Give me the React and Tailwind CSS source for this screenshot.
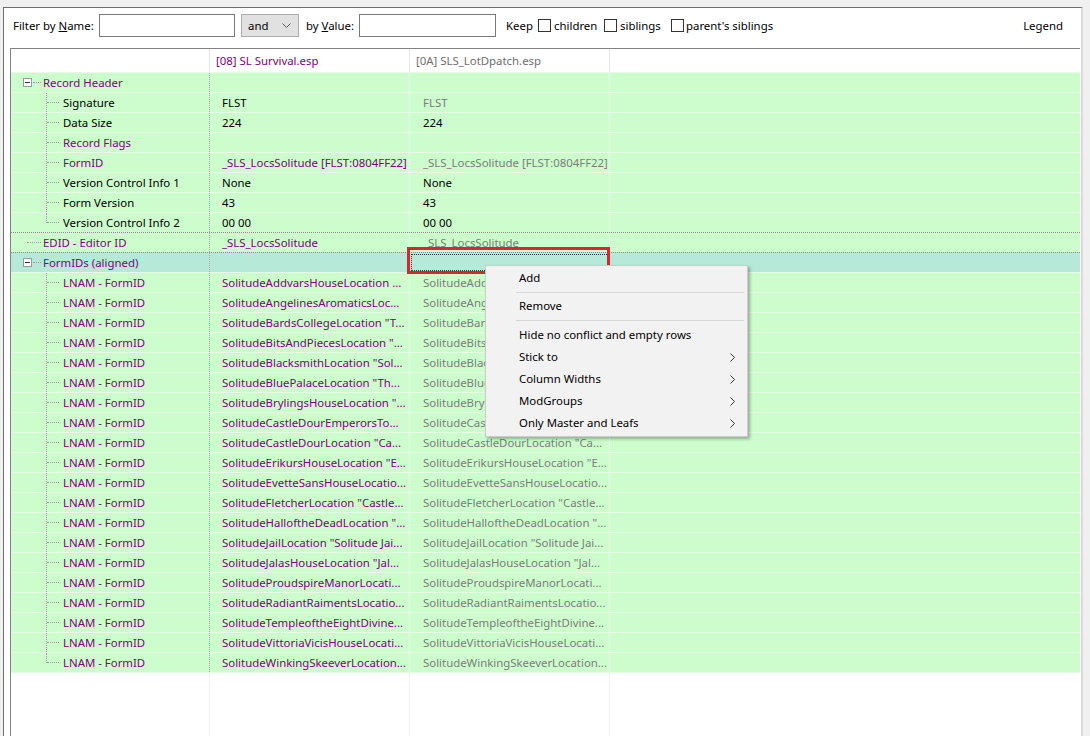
import React from "react";

const P = "text-[#800080]";
const K = "text-[#000000]";
const G = "text-[#7c7c7c]";

const lnam = [
  "SolitudeAddvarsHouseLocation ...",
  "SolitudeAngelinesAromaticsLoc...",
  'SolitudeBardsCollegeLocation "T...',
  'SolitudeBitsAndPiecesLocation "...',
  'SolitudeBlacksmithLocation "Sol...',
  'SolitudeBluePalaceLocation "Th...',
  'SolitudeBrylingsHouseLocation "...',
  "SolitudeCastleDourEmperorsTo...",
  'SolitudeCastleDourLocation "Ca...',
  'SolitudeErikursHouseLocation "E...',
  "SolitudeEvetteSansHouseLocatio...",
  'SolitudeFletcherLocation "Castle...',
  'SolitudeHalloftheDeadLocation "...',
  'SolitudeJailLocation "Solitude Jai...',
  'SolitudeJalasHouseLocation "Jal...',
  "SolitudeProudspireManorLocati...",
  "SolitudeRadiantRaimentsLocatio...",
  "SolitudeTempleoftheEightDivine...",
  "SolitudeVittoriaVicisHouseLocati...",
  "SolitudeWinkingSkeeverLocation...",
];

const rows = [
  { name: "Record Header", lvl: 0, box: true, c0: P },
  { name: "Signature", lvl: 1, c0: K, v1: "FLST", c1: K, v2: "FLST", c2: G },
  { name: "Data Size", lvl: 1, c0: K, v1: "224", c1: K, v2: "224", c2: K },
  { name: "Record Flags", lvl: 1, c0: P },
  {
    name: "FormID",
    lvl: 1,
    c0: P,
    v1: "_SLS_LocsSolitude [FLST:0804FF22]",
    c1: P,
    v2: "_SLS_LocsSolitude [FLST:0804FF22]",
    c2: G,
  },
  { name: "Version Control Info 1", lvl: 1, c0: K, v1: "None", c1: K, v2: "None", c2: K },
  { name: "Form Version", lvl: 1, c0: K, v1: "43", c1: K, v2: "43", c2: K },
  { name: "Version Control Info 2", lvl: 1, last: true, c0: K, v1: "00 00", c1: K, v2: "00 00", c2: K },
  { name: "EDID - Editor ID", lvl: 0, dot: true, c0: P, v1: "_SLS_LocsSolitude", c1: P, v2: "_SLS_LocsSolitude", c2: G },
  { name: "FormIDs (aligned)", lvl: 0, box: true, dot: true, teal: true, focus: true, c0: P },
  ...lnam.map((v, i) => ({
    name: "LNAM - FormID",
    lvl: 1,
    last: i === lnam.length - 1,
    c0: P,
    v1: v,
    c1: P,
    v2: v,
    c2: G,
  })),
];

const menu = [
  { label: "Add" },
  { sep: "mt-[3px] mb-[2px]" },
  { label: "Remove" },
  { sep: "my-[3px]" },
  { label: "Hide no conflict and empty rows" },
  { label: "Stick to", sub: true },
  { label: "Column Widths", sub: true },
  { label: "ModGroups", sub: true },
  { label: "Only Master and Leafs", sub: true },
];

const MinusBox = () => (
  <div className="absolute left-[12px] top-[5px] w-[9px] h-[9px] border border-[#9a9a9a] bg-white flex items-center justify-center">
    <div className="w-[5px] h-px bg-[#333]" />
  </div>
);

const Tree = ({ r }) => {
  if (r.lvl === 0) {
    return (
      <>
        {r.box && <MinusBox />}
        <div
          className={`absolute top-[9px] h-0 border-t border-dotted border-[#a0a0a0] ${
            r.box ? "left-[22px] w-[8px]" : "left-[16px] w-[14px]"
          }`}
        />
      </>
    );
  }
  return (
    <>
      <div
        className={`absolute left-[35px] top-0 w-0 border-l border-dotted border-[#a0a0a0] ${
          r.last ? "h-[10px]" : "h-[19px]"
        }`}
      />
      <div className="absolute left-[36px] top-[9px] w-[12px] h-0 border-t border-dotted border-[#a0a0a0]" />
    </>
  );
};

const Row = ({ r }) => (
  <div
    className={`flex h-[20px] box-border border-t ${r.teal ? "bg-[#b7e9d9]" : "bg-[#cdfccd]"} ${
      r.dot ? "border-dotted border-[#8c8c8c]" : "border-[#e3fce3]"
    }`}
  >
    <div className="relative w-[199px] shrink-0 border-r border-dotted border-[#a8a8a8]">
      <Tree r={r} />
      <div
        className={`absolute top-0 h-[19px] flex items-center whitespace-nowrap ${r.c0} ${
          r.lvl === 0 ? "left-[32px]" : "left-[52px]"
        }`}
      >
        {r.name}
      </div>
    </div>
    <div
      className={`w-[200px] shrink-0 pl-[12px] flex items-center whitespace-nowrap overflow-hidden border-r border-[#e8fde8] ${
        r.c1 || ""
      }`}
    >
      {r.v1}
    </div>
    <div
      className={`w-[200px] shrink-0 pl-[13px] flex items-center whitespace-nowrap overflow-hidden border-r border-[#e8fde8] ${
        r.c2 || ""
      } ${r.focus ? "outline outline-1 outline-dotted outline-[#333] -outline-offset-2" : ""}`}
    >
      {r.v2}
    </div>
    <div className="flex-1" />
  </div>
);

const Check = () => (
  <span className="inline-block w-[13px] h-[13px] border border-[#333] bg-white shrink-0" />
);

const App = () => {
  return (
    <div
      className="relative w-[1090px] h-[736px] overflow-hidden bg-[#f0f0f0] text-[11.4px] text-black"
      style={{ fontFamily: '"Noto Sans", "Open Sans", sans-serif' }}
    >
      <div className="ml-[3px] mt-[7px] w-[1080px] h-[729px] bg-white border-l border-t border-[#6e6e6e] border-r-2 border-r-[#dadada] flex flex-col">
        {/* filter bar */}
        <div className="h-[40px] shrink-0 flex items-center pl-[9px] pb-[5px]">
          <span className="w-[86px] shrink-0">
            Filter by <span className="underline">N</span>ame:
          </span>
          <div className="w-[136px] h-[23px] shrink-0 border border-[#7a7a7a] bg-white" />
          <div className="ml-[6px] w-[58px] h-[23px] shrink-0 border border-[#adadad] bg-[#e1e1e1] flex items-center justify-between pl-[6px] pr-[7px]">
            <span>and</span>
            <svg width="9" height="5" viewBox="0 0 9 5">
              <polyline points="0.5,0.5 4.5,4.5 8.5,0.5" fill="none" stroke="#555" strokeWidth="1" />
            </svg>
          </div>
          <span className="ml-[7px] w-[53px] shrink-0">
            by <span className="underline">V</span>alue:
          </span>
          <div className="w-[137px] h-[23px] shrink-0 border border-[#7a7a7a] bg-white" />
          <span className="ml-[10px] w-[32px] shrink-0">Keep</span>
          <Check />
          <span className="ml-[3px] w-[50px] shrink-0">children</span>
          <Check />
          <span className="ml-[3px] w-[51px] shrink-0">siblings</span>
          <Check />
          <span className="ml-[2px]">parent's siblings</span>
          <span className="ml-auto mr-[18px]">Legend</span>
        </div>

        {/* tree panel */}
        <div className="ml-[6px] mr-[1px] flex-1 border-t border-l border-[#828282] bg-white flex flex-col">
          <div className="flex h-[23px] shrink-0">
            <div className="w-[199px] shrink-0 border-r border-[#e5e5e5]" />
            <div className="w-[200px] shrink-0 pl-[6px] flex items-center border-r border-[#e5e5e5] text-[#800080]">
              [08] SL Survival.esp
            </div>
            <div className="w-[200px] shrink-0 pl-[6px] flex items-center border-r border-[#e5e5e5] text-[#6e6e6e]">
              [0A] SLS_LotDpatch.esp
            </div>
            <div className="flex-1" />
          </div>
          {rows.map((r, i) => (
            <Row key={i} r={r} />
          ))}
          <div className="flex flex-1 border-t border-[#e3fce3]">
            <div className="w-[199px] shrink-0 border-r border-[#f0f0f0]" />
            <div className="w-[200px] shrink-0 border-r border-[#f0f0f0]" />
            <div className="w-[200px] shrink-0 border-r border-[#f0f0f0]" />
          </div>
        </div>
      </div>

      {/* annotation */}
      <div className="absolute left-[407px] top-[247px] w-[203px] h-[27px] border-[3px] border-[#d8262c]" />

      {/* context menu */}
      <div className="absolute left-[485px] top-[265px] w-[263px] bg-[#f2f2f2] border border-[#cccccc] shadow-[2px_2px_3px_rgba(0,0,0,0.3)] pt-[1px] pb-[2px]">
        {menu.map((m, i) =>
          m.sep ? (
            <div key={i} className={`ml-[30px] mr-[3px] h-px bg-[#d7d7d7] ${m.sep}`} />
          ) : (
            <div key={i} className="h-[22px] flex items-center pl-[33px] pr-[12px] justify-between">
              <span>{m.label}</span>
              {m.sub && (
                <svg width="5" height="9" viewBox="0 0 5 9">
                  <polyline points="0.5,0.5 4.5,4.5 0.5,8.5" fill="none" stroke="#333" strokeWidth="1" />
                </svg>
              )}
            </div>
          )
        )}
      </div>
    </div>
  );
};

export default App;
